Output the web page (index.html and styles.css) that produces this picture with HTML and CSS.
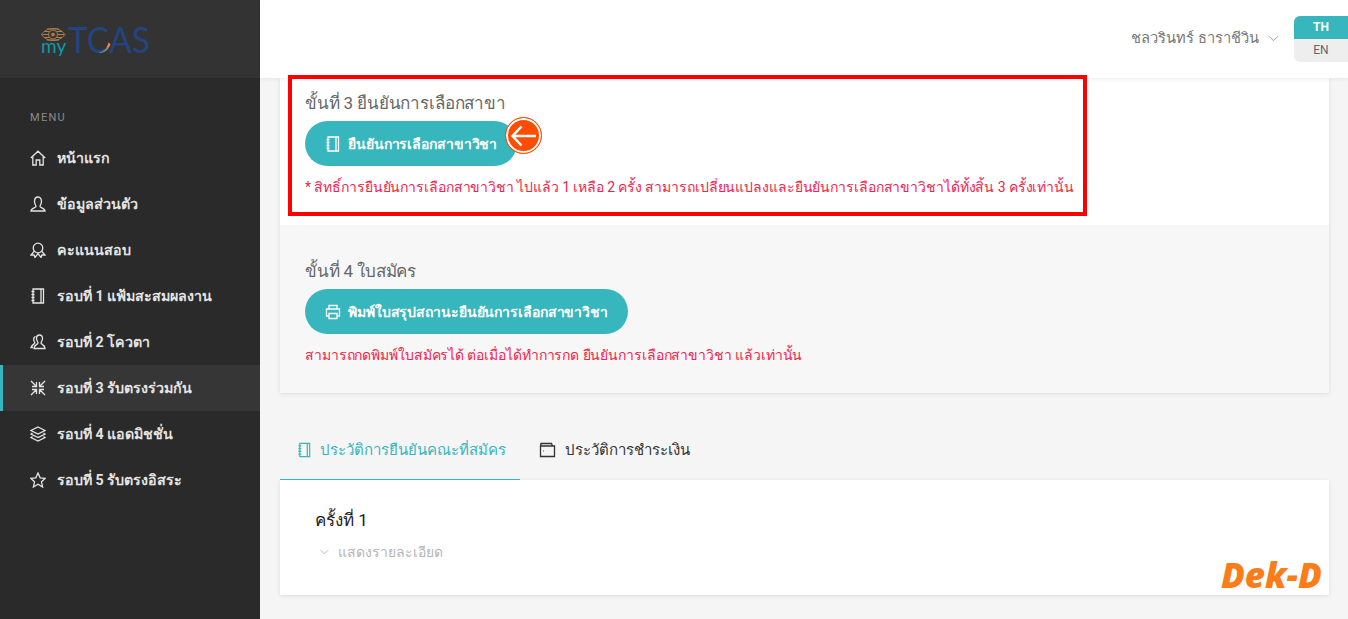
FILE: index.html
```html
<!DOCTYPE html>
<html lang="th">
<head>
<meta charset="utf-8">
<title>myTCAS</title>
<link rel="stylesheet" href="styles.css">
</head>
<body>
<aside class="sidebar">
  <div class="brand">
    <svg class="logo" width="130" height="36" viewBox="0 0 130 36">
      <g fill="none" stroke="#ad7f4e" stroke-width="1">
        <path d="M.5 7.500C6 -.5 18 -.5 24 7.500C18 15.500 6 15.500 .5 7.500Z"/>
        <path d="M3 4.500H21M1.500 7.500H23M3 10.500H21M6 2H18M6 13H18"/>
      </g>
      <circle cx="12" cy="7.500" r="4.500" fill="#3b3632" stroke="#ad7f4e"/>
      <circle cx="12" cy="7.500" r="1.800" fill="#ad7f4e"/>
      <text x="0" y="26" class="logo-my">my</text>
      <text x="27" y="26" class="logo-tcas" textLength="82" lengthAdjust="spacingAndGlyphs">TCAS</text>
      <path d="M58 25.500C63 25 66 21 67.500 15.500L69.500 17C68 22 63.500 26.500 58 25.500Z" fill="#f08a3c"/>
      <path d="M58 25.500C62 25.500 65 23 66.500 20" fill="none" stroke="#1c8fb0" stroke-width="1"/>
    </svg>
  </div>
  <div class="menu-label">MENU</div>
  <nav class="menu">
    <a class="menu-item">
      <svg class="ic" viewBox="0 0 16 16"><path d="M.8 8 8 1.200 15.200 8M2.800 6.500V15H6.200V10H9.800V15H13.200V6.500"/></svg>หน้าแรก</a>
    <a class="menu-item">
      <svg class="ic" viewBox="0 0 16 16"><path d="M8 1C5.500 1 4.500 3 4.500 5.500S6 9.500 6 10.500C6 12 1 12 1 15H15C15 12 10 12 10 10.500 10 9.500 11.500 8 11.500 5.500S10.500 1 8 1Z"/></svg>ข้อมูลส่วนตัว</a>
    <a class="menu-item">
      <svg class="ic" viewBox="0 0 16 16"><circle cx="8" cy="6" r="4.800"/><path d="M4.500 9 1 13 4 13 5 15.500 8 11.500 11 15.500 12 13 15 13 11.500 9"/></svg>คะแนนสอบ</a>
    <a class="menu-item">
      <svg class="ic" viewBox="0 0 16 16"><path d="M3 1H13.500V15H3ZM11 1V15M1.500 3.500H4.500M1.500 6.500H4.500M1.500 9.500H4.500M1.500 12.500H4.500"/></svg>รอบที่ 1 แฟ้มสะสมผลงาน</a>
    <a class="menu-item">
      <svg class="ic" viewBox="0 0 16 16"><path d="M9.500 1C7.500 1 6.500 2.500 6.500 4.500S8 8 8 9C8 10.500 4 10.500 4 14.500H15C15 10.500 11 10.500 11 9 11 8 12.500 6.500 12.500 4.500S11.500 1 9.500 1ZM5.500 2.500C4 3 3.500 4.500 3.800 6 4 7.500 4.800 8 4.800 9 4.800 10 2 10.500 1 13.500H3"/></svg>รอบที่ 2 โควตา</a>
    <a class="menu-item active">
      <svg class="ic" viewBox="0 0 16 16"><path d="M1 1 6.500 6.500M6.500 2V6.500H2M15 1 9.500 6.500M9.500 2V6.500H14M1 15 6.500 9.500M2 9.500H6.500V14M15 15 9.500 9.500M14 9.500H9.500V14"/></svg>รอบที่ 3 รับตรงร่วมกัน</a>
    <a class="menu-item">
      <svg class="ic" viewBox="0 0 16 16"><path d="M8 1 15 4.500 8 8 1 4.500ZM2.500 7 1 8 8 11.500 15 8 13.500 7M2.500 10.500 1 11.500 8 15 15 11.500 13.500 10.500"/></svg>รอบที่ 4 แอดมิชชั่น</a>
    <a class="menu-item">
      <svg class="ic" viewBox="0 0 16 16"><path d="M8 1 10.200 5.800 15.300 6.300 11.500 9.800 12.600 15 8 12.300 3.400 15 4.500 9.800 .7 6.300 5.800 5.800Z"/></svg>รอบที่ 5 รับตรงอิสระ</a>
  </nav>
</aside>

<div class="page">
  <header class="topbar">
    <div class="user">ชลวรินทร์ ธาราชีวิน
      <svg class="chev" viewBox="0 0 12 8"><path d="M1 1.500 6 6.500 11 1.500"/></svg>
    </div>
    <div class="lang">
      <span class="lang-on">TH</span>
      <span class="lang-off">EN</span>
    </div>
  </header>

  <main class="content">
    <section class="card">
      <div class="step step-white">
        <h3 class="step-title">ขั้นที่ 3 ยืนยันการเลือกสาขา</h3>
        <a class="btn">
          <svg class="ic ic-btn" viewBox="0 0 16 16"><path d="M3 1H13.500V15H3ZM11 1V15M1.500 3.500H4.500M1.500 6.500H4.500M1.500 9.500H4.500M1.500 12.500H4.500"/></svg>ยืนยันการเลือกสาขาวิชา</a>
        <p class="note">* สิทธิ์การยืนยันการเลือกสาขาวิชา ไปแล้ว 1 เหลือ 2 ครั้ง สามารถเปลี่ยนแปลงและยืนยันการเลือกสาขาวิชาได้ทั้งสิ้น 3 ครั้งเท่านั้น</p>
      </div>
      <div class="step step-grey">
        <h3 class="step-title">ขั้นที่ 4 ใบสมัคร</h3>
        <a class="btn">
          <svg class="ic ic-btn" viewBox="0 0 16 16"><path d="M4 5V1.500H12V5M4 12H1.500V5H14.500V12H12M4 9.500H12V14.500H4Z"/></svg>พิมพ์ใบสรุปสถานะยืนยันการเลือกสาขาวิชา</a>
        <p class="note">สามารถกดพิมพ์ใบสมัครได้ ต่อเมื่อได้ทำการกด ยืนยันการเลือกสาขาวิชา แล้วเท่านั้น</p>
      </div>
    </section>

    <div class="tabs">
      <a class="tab tab-on">
        <svg class="ic ic-tab" viewBox="0 0 16 16"><path d="M3 1H13.500V15H3ZM11 1V15M1.500 3.500H4.500M1.500 6.500H4.500M1.500 9.500H4.500M1.500 12.500H4.500"/></svg>ประวัติการยืนยันคณะที่สมัคร</a>
      <a class="tab tab-folder">
        <svg class="ic ic-tab2" viewBox="0 0 16 16"><path d="M1 4V14.500H15V4H1ZM1 4 1.500 1.500H12L13 4M3.500 9H4"/></svg>ประวัติการชำระเงิน</a>
    </div>

    <section class="panel">
      <h4 class="round">ครั้งที่ 1</h4>
      <div class="more">
        <svg class="chev chev-sm" viewBox="0 0 12 8"><path d="M1 1.500 6 6.500 11 1.500"/></svg>แสดงรายละเอียด
      </div>
    </section>
  </main>
</div>

<div class="mark-box"></div>
<div class="mark-arrow">
  <svg width="30" height="30" viewBox="0 0 30 30"><path d="M27 15H3.500M12.500 5.500 3.500 15 12.500 24.500"/></svg>
</div>
<div class="dekd">Dek-D</div>
</body>
</html>
```
FILE: styles.css
```css
* { box-sizing: border-box; }
html, body { height: 100%; }
body {
  margin: 0;
  height: 619px;
  overflow: hidden;
  display: flex;
  background: #f5f5f5;
  color: #555;
  font-family: Roboto, "Noto Sans", "Open Sans", "DejaVu Sans", sans-serif;
  font-size: 15px;
}
a { color: inherit; text-decoration: none; }
.ic { fill: none; stroke: currentColor; stroke-width: 1.3; }

.sidebar { width: 260px; flex: none; background: #2a2a2a; color: #e4e4e4; }
.brand { height: 78px; background: #333; padding: 27px 0 0 41px; }
.logo { display: block; overflow: visible; }
.logo-my { font: 400 19px Lato, sans-serif; fill: #0b9aa8; }
.logo-tcas { font: 400 36px Lato, sans-serif; fill: #24447f; }
.menu-label { margin: 33px 0 0 30px; font-size: 11px; line-height: 14px; letter-spacing: 1.3px; color: #8a8a8a; }
.menu { margin-top: 10px; display: flex; flex-direction: column; }
.menu-item { height: 46px; display: flex; align-items: center; gap: 11px; padding: 0 0 0 30px; font-size: 14.250px; font-weight: 700; }
.menu-item .ic { width: 16px; height: 16px; flex: none; }
.menu-item.active { background: #363636; border-left: 3px solid #37b6bd; padding-left: 27px; }

.page { flex: 1; min-width: 0; display: flex; flex-direction: column; }
.topbar { height: 78px; flex: none; background: #fff; display: flex; align-items: flex-start; justify-content: flex-end; box-shadow: 0 1px 4px rgba(0,0,0,.08); position: relative; }
.user { margin: 26px 15px 0 0; line-height: 24px; font-size: 14.700px; color: #777; display: flex; align-items: center; gap: 9px; }
.chev { width: 11px; height: 7px; fill: none; stroke: #999; stroke-width: 1.100; }
.lang { width: 54px; margin-top: 16px; display: flex; flex-direction: column; font-size: 12px; text-align: center; border-radius: 6px 0 0 6px; overflow: hidden; }
.lang-on { height: 23px; line-height: 23px; background: #37b6bd; color: #fff; font-weight: 700; }
.lang-off { height: 23px; line-height: 23px; background: #eee; color: #666; }

.content { padding: 0 19px 0 20px; flex: 1; }
.card { box-shadow: 0 1px 4px rgba(0,0,0,.1); }
.step { padding: 0 25px; }
.step-white { background: #fff; height: 147px; padding-top: 12px; }
.step-grey { background: #f7f7f7; height: 168px; padding-top: 33px; }
.step-title { margin: 0 0 5px; font-size: 17px; line-height: 26px; font-weight: 400; color: #666; letter-spacing: -.15px; }
.btn { display: inline-flex; align-items: center; gap: 7px; height: 45px; padding: 0 20px; border-radius: 23px; background: #37b6bd; color: #fff; font-size: 14px; font-weight: 700; letter-spacing: -.1px; }
.ic-btn { width: 16px; height: 16px; }
.note { margin: 10px 0 0; line-height: 22px; font-size: 14px; color: #f5224b; letter-spacing: -.1px; }

.tabs { margin-top: 37px; height: 50px; display: flex; }
.tab { display: flex; align-items: center; gap: 8px; padding: 0 14px 10px 17px; font-size: 15px; color: #333; }
.tab-on { color: #37b6bd; border-bottom: 1px solid #37b6bd; }
.tab-folder { padding-left: 19px; gap: 9px; }
.ic-tab { width: 15px; height: 16px; }
.ic-tab2 { width: 17px; height: 16px; }

.panel { height: 115px; background: #fff; padding: 27px 35px; box-shadow: 0 1px 4px rgba(0,0,0,.1); }
.round { margin: 0; font-size: 17px; line-height: 26px; font-weight: 400; color: #222; }
.more { margin-top: 8px; display: flex; align-items: center; gap: 9px; padding-left: 5px; font-size: 14px; color: #b5b5b5; }
.chev-sm { width: 9px; height: 6px; stroke: #aaa; }

.mark-box { position: absolute; left: 288px; top: 75px; width: 799px; height: 141px; border: 4px solid #f00; }
.mark-arrow { position: absolute; left: 505px; top: 117px; width: 37px; height: 37px; border-radius: 50%; background: #fc4d02; border: 1px solid #fc4d02; box-shadow: inset 0 0 0 2px #fff; display: flex; align-items: center; justify-content: center; }
.mark-arrow svg { fill: none; stroke: #fff; stroke-width: 2.500; }
.dekd { position: absolute; left: 1221px; top: 553px; font: italic 800 35px/44px "Open Sans", sans-serif; color: #fb7d1a; letter-spacing: -.1px; }
```
